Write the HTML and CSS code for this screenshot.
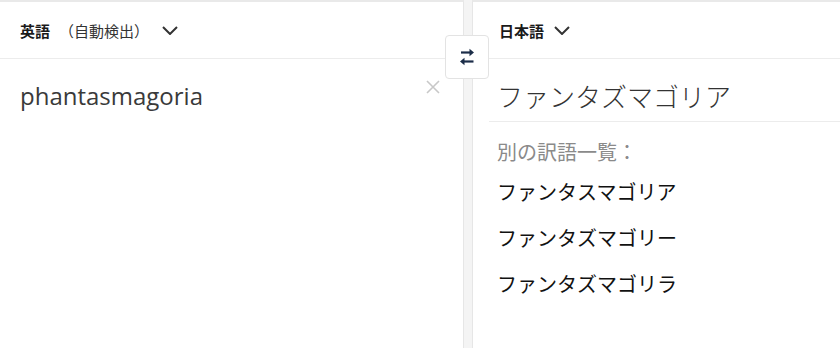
FILE: index.html
```html
<!DOCTYPE html>
<html lang="ja">
<head>
<meta charset="utf-8">
<link rel="stylesheet" href="styles.css">
</head>
<body>
<div class="app">
  <section class="pane src">
    <header class="bar">
      <span class="lang">英語</span>
      <span class="detect">（自動検出）</span>
      <svg class="chev" width="16" height="9" viewBox="0 0 16 9"><path d="M1 1l7 7 7-7" fill="none" stroke="#333" stroke-width="2"/></svg>
    </header>
    <div class="src-body">
      <div class="src-text">phantasmagoria</div>
      <button class="clear" aria-label="clear"><svg width="14" height="14" viewBox="0 0 14 14"><path d="M1 1l12 12M13 1L1 13" stroke="#c8c8c8" stroke-width="1.6" fill="none"/></svg></button>
    </div>
  </section>
  <div class="gutter"></div>
  <section class="pane dst">
    <header class="bar dst-bar">
      <span class="lang">日本語</span>
      <svg class="chev" width="16" height="9" viewBox="0 0 16 9"><path d="M1 1l7 7 7-7" fill="none" stroke="#333" stroke-width="2"/></svg>
    </header>
    <div class="result">
      <div class="main-tr">ファンタズマゴリア</div>
      <div class="alts">
        <div class="alts-title">別の訳語一覧：</div>
        <div class="alt">ファンタスマゴリア</div>
        <div class="alt">ファンタズマゴリー</div>
        <div class="alt">ファンタズマゴリラ</div>
      </div>
    </div>
  </section>
  <button class="swap" aria-label="swap">
    <svg width="20" height="20" viewBox="0 0 20 20"><path d="M4 5.5h9" stroke="#1b2d48" stroke-width="2.2"/><path d="M12.5 1.8L17 5.5 12.5 9.2z" fill="#1b2d48"/><path d="M7 14.5h9.5" stroke="#1b2d48" stroke-width="2.2"/><path d="M7.5 10.8L3 14.5 7.5 18.2z" fill="#1b2d48"/></svg>
  </button>
</div>
</body>
</html>
```
FILE: styles.css
```css
html, body {
  margin: 0;
  padding: 0;
  background: #f4f4f4;
  font-family: "Noto Sans", "Noto Sans CJK JP", sans-serif;
  color: #333;
}
.app {
  position: relative;
  display: flex;
  height: 348px;
  overflow: hidden;
}
.pane {
  background: #fff;
  border-top: 2px solid #e9e9e9;
  display: flex;
  flex-direction: column;
}
.src {
  width: 463px;
  border-right: 1px solid #e6e6e6;
}
.gutter {
  width: 8px;
}
.dst {
  flex: 1;
  border-left: 1px solid #e6e6e6;
}
.bar {
  height: 56px;
  border-bottom: 1px solid #ececec;
  display: flex;
  align-items: center;
  padding-left: 20px;
  font-family: "Noto Sans CJK JP", sans-serif;
  font-size: 15px;
}
.lang {
  font-weight: 700;
  color: #1a1a1a;
}
.detect {
  margin-left: 9px;
  color: #333;
}
.chev {
  margin-left: 13px;
  margin-top: 1px;
}
.dst-bar {
  padding-left: 26px;
}
.dst-bar .chev {
  margin-left: 10px;
}
.src-body {
  position: relative;
  padding: 21px 20px 0;
}
.src-text {
  font-family: "Open Sans", sans-serif;
  font-size: 24px;
  line-height: 32px;
  color: #3a3a3a;
}
.clear {
  position: absolute;
  top: 21px;
  right: 23px;
  border: 0;
  background: none;
  padding: 0;
  width: 14px;
  height: 14px;
}
.result {
  margin-left: 16px;
}
.main-tr {
  font-family: "Noto Sans CJK JP", sans-serif;
  font-weight: 300;
  font-size: 26px;
  line-height: 36px;
  color: #333;
  padding: 19px 0 7px 8px;
  border-bottom: 1px solid #ececec;
}
.alts {
  padding: 13px 0 0 8px;
  font-family: "Noto Sans CJK JP", sans-serif;
  font-size: 20px;
}
.alts-title {
  color: #8a8a8a;
  line-height: 34px;
}
.alt {
  color: #111;
  line-height: 46px;
}
.swap {
  position: absolute;
  left: 445px;
  top: 35px;
  width: 44px;
  height: 44px;
  background: #fff;
  border: 1px solid #e3e3e3;
  border-radius: 4px;
  padding: 0;
  display: flex;
  align-items: center;
  justify-content: center;
}
```
